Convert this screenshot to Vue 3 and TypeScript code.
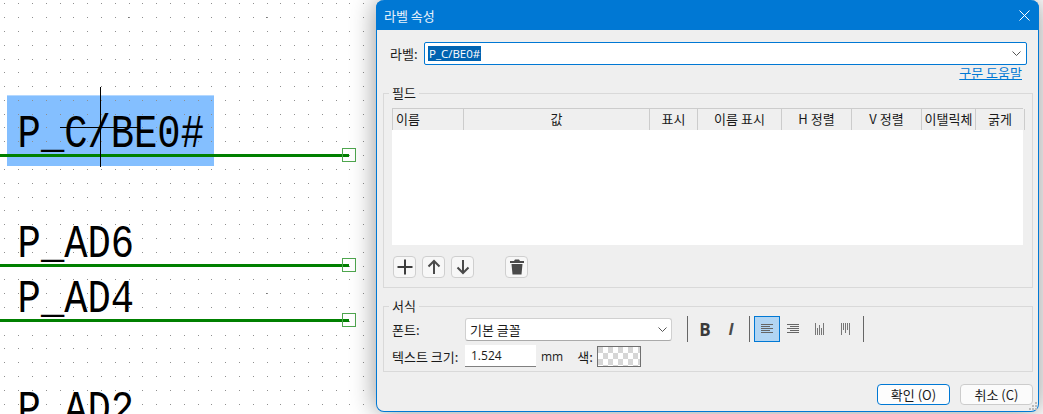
<template>
  <div class="page">
    <!-- schematic behind the dialog -->
    <div class="sheet">
      <svg class="sheet-art" width="1043" height="414">
        <rect x="7" y="95" width="207" height="71" fill="#84bfff" />
        <rect x="7" y="95" width="207" height="1" fill="#b4d8ff" />
        <path :d="gridDots" fill="#8f8f8f" />
        <path :d="majorDots" fill="#777" />
        <g v-for="net in nets" :key="net.name">
          <text class="net-label" :transform="`translate(17.6 ${net.y - 8}) scale(.826 1)`">{{ net.name }}</text>
          <template v-if="net.pin">
            <rect x="0" :y="net.y - 1" width="349" height="3" fill="#008000" />
            <rect x="342.5" :y="net.y - 6.5" width="13" height="13" fill="none" stroke="#4ea64e" />
          </template>
        </g>
        <rect x="100" y="87" width="1" height="80" fill="#000" />
        <rect x="60" y="127" width="80" height="1" fill="#000" />
      </svg>
    </div>

    <section class="dialog">
      <header class="titlebar">
        <span>라벨 속성</span>
        <svg class="close" width="11" height="11" viewBox="0 0 11 11">
          <path d="M.5.5l10 10M10.5.5l-10 10" stroke="#fff" fill="none" />
        </svg>
      </header>

      <div class="body">
        <div class="label-row">
          <label class="label-name">라벨:</label>
          <div class="label-input">
            <span class="selected">P_C/BE0#</span>
            <svg class="chevron" width="9" height="5" viewBox="0 0 9 5">
              <path d="M.5.5l4 4 4-4" stroke="#555" fill="none" />
            </svg>
          </div>
        </div>
        <a class="help-link">구문 도움말</a>

        <fieldset class="group fields">
          <legend>필드</legend>
          <div class="grid-table">
            <div class="grid-head">
              <div v-for="col in columns" :key="col.title" class="head-cell" :class="{ left: col.left }" :style="{ width: col.width + 'px' }">
                {{ col.title }}
              </div>
            </div>
            <div class="grid-body"></div>
          </div>
          <div class="row-tools">
            <button class="tool">
              <svg width="18" height="18" viewBox="0 0 18 18"><path d="M9 1.5v15M1.5 9h15" stroke="#3c3c3c" stroke-width="2" fill="none" /></svg>
            </button>
            <button class="tool">
              <svg width="18" height="18" viewBox="0 0 18 18"><path d="M9 16V3M3.5 8.5L9 3l5.5 5.5" stroke="#4a4a4a" stroke-width="2" fill="none" /></svg>
            </button>
            <button class="tool">
              <svg width="18" height="18" viewBox="0 0 18 18"><path d="M9 2v13M3.5 9.5L9 15l5.5-5.5" stroke="#4a4a4a" stroke-width="2" fill="none" /></svg>
            </button>
            <button class="tool trash">
              <svg width="18" height="18" viewBox="0 0 18 18">
                <path d="M7 1.5h4l1 1.5h4v2H2V3h4zM3.5 6h11l-1 10.5h-9z" fill="#4a4a4a" />
              </svg>
            </button>
          </div>
        </fieldset>

        <fieldset class="group format">
          <legend>서식</legend>
          <div class="format-row">
            <label class="format-name">폰트:</label>
            <div class="font-select">
              <span>기본 글꼴</span>
              <svg width="9" height="5" viewBox="0 0 9 5"><path d="M.5.5l4 4 4-4" stroke="#555" fill="none" /></svg>
            </div>
            <div class="toolbar">
              <i class="sep"></i>
              <button class="style-btn bold">B</button>
              <button class="style-btn italic">I</button>
              <i class="sep"></i>
              <button class="style-btn on">
                <svg width="12" height="10" viewBox="0 0 12 10"><path d="M0 .5h12M0 2.5h9M0 4.5h12M0 6.5h9M0 8.5h12" stroke="#666" fill="none" /></svg>
              </button>
              <button class="style-btn">
                <svg width="12" height="10" viewBox="0 0 12 10"><path d="M0 .5h12M3 2.5h9M0 4.5h12M3 6.5h9M0 8.5h12" stroke="#666" fill="none" /></svg>
              </button>
              <button class="style-btn">
                <svg width="9" height="12" viewBox="0 0 9 12"><path d="M.5 0v12M2.5 5v7M4.5 2v10M6.5 5v7M8.5 0v12" stroke="#777" fill="none" /></svg>
              </button>
              <button class="style-btn">
                <svg width="9" height="12" viewBox="0 0 9 12"><path d="M.5 0v12M2.5 0v7M4.5 0v10M6.5 0v7M8.5 0v12" stroke="#777" fill="none" /></svg>
              </button>
              <i class="sep"></i>
            </div>
          </div>
          <div class="format-row size-row">
            <label class="format-name">텍스트 크기:</label>
            <div class="size-input">1.524</div>
            <span class="unit">mm</span>
            <label class="color-name">색:</label>
            <div class="swatch"></div>
          </div>
        </fieldset>

        <footer class="actions">
          <button class="action primary">확인 (O)</button>
          <button class="action">취소 (C)</button>
        </footer>
      </div>
      <svg class="grip" width="10" height="10" viewBox="0 0 10 10">
        <path d="M7 1h2v2H7zM4 4h2v2H4zM7 4h2v2H7zM1 7h2v2H1zM4 7h2v2H4zM7 7h2v2H7z" fill="#bbb" />
      </svg>
    </section>
  </div>
</template>

<script setup lang="ts">
const pitch = 13.8;

const dotsAt = (x0: number, y0: number, dx: number, dy: number) => {
  let d = '';
  for (let y = y0; y < 414; y += dy) {
    for (let x = x0; x < 380; x += dx) {
      d += `M${Math.round(x)} ${Math.round(y)}h1v1h-1z`;
    }
  }
  return d;
};

const gridDots = dotsAt(4.3, 3.3, pitch, pitch);
const majorDots = dotsAt(128, 17, pitch * 10, pitch * 20);

const nets = [
  { name: 'P_C/BE0#', y: 155, pin: true },
  { name: 'P_AD6', y: 265, pin: true },
  { name: 'P_AD4', y: 320, pin: true },
  { name: 'P_AD2', y: 431, pin: false },
];

const columns = [
  { title: '이름', width: 71, left: true },
  { title: '값', width: 186 },
  { title: '표시', width: 48 },
  { title: '이름 표시', width: 84 },
  { title: 'H 정렬', width: 70 },
  { title: 'V 정렬', width: 70 },
  { title: '이탤릭체', width: 54 },
  { title: '굵게', width: 49 },
];
</script>

<style>
html,
body {
  margin: 0;
  background: #fff;
  overflow: hidden;
}
</style>

<style scoped>
.page {
  position: relative;
  width: 1043px;
  height: 414px;
  overflow: hidden;
  font-family: "Noto Sans CJK KR", "Noto Sans", sans-serif;
  font-size: 13px;
  color: #1a1a1a;
}

.sheet-art {
  display: block;
}

.net-label {
  font-family: "Liberation Mono", monospace;
  font-size: 47px;
  fill: #000;
}

.dialog {
  position: absolute;
  left: 376px;
  top: 0;
  width: 663px;
  height: 412px;
  box-sizing: border-box;
  display: flex;
  flex-direction: column;
  background: #efefef;
  border: 1px solid #0078d4;
  border-top: 0;
  border-radius: 8px;
  box-shadow: 0 0 26px rgba(0, 0, 0, 0.42);
}

.titlebar {
  flex: none;
  height: 30px;
  display: flex;
  align-items: center;
  justify-content: space-between;
  padding: 0 9px 0 8px;
  background: #0078d4;
  color: #e8f2fb;
  font-size: 13px;
  border-radius: 8px 8px 0 0;
  margin: 0 -1px;
}

.body {
  flex: 1;
  display: flex;
  flex-direction: column;
  padding: 0 5px 0 6px;
}

.label-row {
  display: flex;
  align-items: center;
  margin-top: 12px;
  height: 23px;
}

.label-name {
  width: 41px;
  padding-left: 7px;
  box-sizing: border-box;
  white-space: nowrap;
}

.label-input {
  flex: none;
  width: 603px;
  height: 23px;
  box-sizing: border-box;
  display: flex;
  align-items: center;
  justify-content: space-between;
  padding: 0 5px 0 3px;
  background: #fff;
  border: 1px solid #0078d4;
  border-radius: 2px;
}

.selected {
  background: #0063b1;
  color: #fff;
  font-family: "Open Sans", sans-serif;
  font-size: 11.5px;
  line-height: 15px;
  padding: 0 1px;
}

.help-link {
  align-self: flex-end;
  margin: 1px 11px 0 0;
  line-height: 14px;
  height: 15px;
  color: #0078d4;
  text-decoration: underline;
}

.group {
  margin: 0;
  padding: 0;
  border: 1px solid #d9d9d9;
  min-width: 0;
}

.group legend {
  margin-left: -3px;
  padding: 0 3px;
  line-height: 14px;
  font-size: 13px;
}

.fields {
  margin-top: 5px;
  height: 202px;
  box-sizing: border-box;
  padding: 8px 9px 0 8px;
}

.grid-head {
  display: flex;
  height: 22px;
  box-sizing: border-box;
  border-top: 1px solid #ccc;
  border-left: 1px solid #ccc;
}

.head-cell {
  box-sizing: border-box;
  flex: none;
  border-right: 1px solid #ccc;
  text-align: center;
  line-height: 20px;
  white-space: nowrap;
}

.head-cell.left {
  text-align: left;
  padding-left: 3px;
}

.grid-body {
  height: 115px;
  background: #fff;
}

.row-tools {
  display: flex;
  gap: 6px;
  margin-top: 11px;
  padding-left: 1px;
}

.tool {
  width: 23px;
  height: 22px;
  padding: 0;
  display: flex;
  align-items: center;
  justify-content: center;
  background: #f7f7f7;
  border: 1px solid #cfcfcf;
  border-radius: 4px;
}

.trash {
  margin-left: 25px;
}

.format {
  margin-top: 11px;
  height: 73px;
  box-sizing: border-box;
  padding: 3px 9px 0 8px;
}

.format-row {
  display: flex;
  align-items: center;
  height: 26px;
}

.format-name {
  width: 73px;
  flex: none;
  white-space: nowrap;
}

.font-select {
  width: 207px;
  height: 23px;
  box-sizing: border-box;
  display: flex;
  align-items: center;
  justify-content: space-between;
  padding: 0 4px 0 4px;
  background: #fff;
  border: 1px solid #d0d0d0;
  border-bottom-color: #aaa;
  border-radius: 3px;
}

.toolbar {
  display: flex;
  align-items: center;
  margin-left: 15px;
}

.sep {
  width: 1px;
  height: 26px;
  background: #666;
}

.style-btn {
  width: 26px;
  height: 26px;
  padding: 0;
  box-sizing: border-box;
  display: flex;
  align-items: center;
  justify-content: center;
  background: none;
  border: 0;
}

.sep + .style-btn {
  margin-left: 4px;
}

.style-btn:has(+ .sep) {
  margin-right: 5px;
}

.style-btn.on {
  background: #b1d5f3;
  border: 1px solid #0078d4;
}

.bold {
  font-family: "Open Sans", sans-serif;
  font-weight: 700;
  font-size: 17px;
  color: #3a3a3a;
}

.italic {
  font-family: "Open Sans", sans-serif;
  font-weight: 700;
  font-style: italic;
  font-size: 16px;
  color: #4a4a4a;
}

.size-row {
  height: 22px;
  margin-top: 3px;
}

.size-input {
  width: 71px;
  height: 22px;
  box-sizing: border-box;
  padding-left: 6px;
  line-height: 21px;
  background: #fff;
  border-bottom: 1px solid #808080;
  font-family: "Open Sans", sans-serif;
  font-size: 12px;
}

.unit {
  margin-left: 5px;
  font-family: "Open Sans", sans-serif;
  font-size: 12px;
}

.color-name {
  margin-left: 14px;
}

.swatch {
  width: 44px;
  height: 21px;
  margin-left: 4px;
  box-sizing: border-box;
  border: 1px solid #707070;
  background-color: #fff;
  background-image: conic-gradient(#fff 25%, #d6d6d6 0 50%, #fff 0 75%, #d6d6d6 0);
  background-size: 10px 12px;
}

.actions {
  display: flex;
  justify-content: flex-end;
  gap: 10px;
  margin-top: 12px;
}

.action {
  width: 73px;
  height: 21px;
  padding: 0;
  box-sizing: border-box;
  font: inherit;
  color: inherit;
  line-height: 19px;
  background: #fbfbfb;
  border: 1px solid #ccc;
  border-radius: 4px;
}

.action.primary {
  border-color: #0078d4;
  background: #fdfdfd;
}

.grip {
  position: absolute;
  right: 0;
  bottom: 0;
}
</style>
